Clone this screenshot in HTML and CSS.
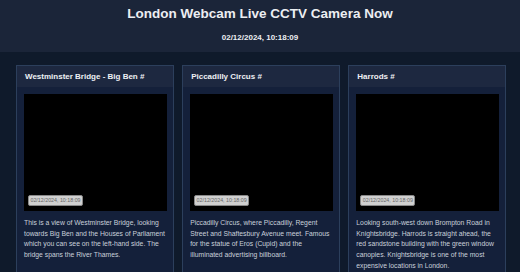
FILE: index.html
```html
<!DOCTYPE html>
<html>
<head>
<meta charset="utf-8">
<link rel="stylesheet" href="styles.css">
</head>
<body>
<header class="top">
  <h1 class="title">London Webcam Live CCTV Camera Now</h1>
  <div class="clock">02/12/2024, 10:18:09</div>
</header>
<main class="grid">
  <section class="card">
    <h2 class="card-head">Westminster Bridge - Big Ben #</h2>
    <div class="card-body">
      <div class="video"><span class="stamp">02/12/2024, 10:18:09</span></div>
      <p class="desc">This is a view of Westminster Bridge, looking towards Big Ben and the Houses of Parliament which you can see on the left-hand side. The bridge spans the River Thames.</p>
    </div>
  </section>
  <section class="card">
    <h2 class="card-head">Piccadilly Circus #</h2>
    <div class="card-body">
      <div class="video"><span class="stamp">02/12/2024, 10:18:09</span></div>
      <p class="desc">Piccadilly Circus, where Piccadilly, Regent Street and Shaftesbury Avenue meet. Famous for the statue of Eros (Cupid) and the illuminated advertising billboard.</p>
    </div>
  </section>
  <section class="card">
    <h2 class="card-head">Harrods #</h2>
    <div class="card-body">
      <div class="video"><span class="stamp">02/12/2024, 10:18:09</span></div>
      <p class="desc">Looking south-west down Brompton Road in Knightsbridge. Harrods is straight ahead, the red sandstone building with the green window canopies. Knightsbridge is one of the most expensive locations in London.</p>
    </div>
  </section>
</main>
</body>
</html>
```
FILE: styles.css
```css
html, body {
  margin: 0;
  padding: 0;
  background: #0f1a2b;
  font-family: "Liberation Sans", Arial, sans-serif;
  overflow: hidden;
}
.top {
  background: #1b2539;
  height: 52px;
  box-sizing: border-box;
  padding-top: 4px;
  text-align: center;
  color: #eceef2;
}
.title {
  margin: 0;
  font-size: 13.5px;
  line-height: 20px;
  font-weight: bold;
}
.clock {
  margin-top: 8px;
  font-size: 8px;
  line-height: 12px;
  font-weight: bold;
}
.grid {
  display: grid;
  grid-template-columns: repeat(3, 1fr);
  gap: 8.5px;
  padding: 13px 14px 0 16px;
}
.card {
  border: 1px solid #2c3f5c;
  background: #14203a;
  height: 260px;
  box-sizing: border-box;
}
.card-head {
  margin: 0;
  background: #1d2840;
  height: 21px;
  padding-left: 8px;
  font-size: 8px;
  line-height: 22px;
  font-weight: bold;
  color: #eef0f4;
}
.card-body {
  padding: 7px 6px 0 7px;
}
.video {
  position: relative;
  background: #000;
  height: 117px;
}
.stamp {
  position: absolute;
  left: 4px;
  bottom: 5px;
  height: 11px;
  width: 55px;
  box-sizing: border-box;
  background: #d0d0d0;
  border: 1px solid #888;
  border-radius: 2px;
  color: #666;
  font-size: 5.3px;
  line-height: 9px;
  text-align: center;
  white-space: nowrap;
}
.desc {
  margin: 7px 0 0;
  padding-right: 1px;
  font-size: 6.8px;
  line-height: 10.7px;
  color: #c9d0da;
}
```
